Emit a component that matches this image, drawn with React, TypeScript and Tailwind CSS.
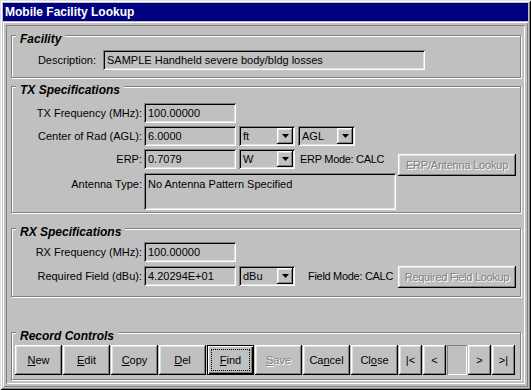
import React from 'react';

// classic 3D bevels
const raised =
  'shadow-[inset_-1px_-1px_0_#000,inset_1px_1px_0_#fff,inset_-2px_-2px_0_#808080,inset_2px_2px_0_#dfdfdf]';
const sunken =
  'shadow-[inset_1px_1px_0_#808080,inset_-1px_-1px_0_#fff,inset_2px_2px_0_#000,inset_-2px_-2px_0_#dfdfdf]';
const disabledText = 'text-[#808080] [text-shadow:1px_1px_0_#fff]';

const Arrow = () => (
  <svg width="7" height="4" viewBox="0 0 7 4">
    <path d="M0 0h7L3.5 4z" fill="#000" />
  </svg>
);

const Group: React.FC<{ label: string; className?: string; children?: React.ReactNode }> = ({
  label,
  className = '',
  children,
}) => (
  <div
    className={`relative w-[510px] border border-[#808080] shadow-[inset_1px_1px_0_#fff,1px_1px_0_#fff] ${className}`}
  >
    <span className="absolute left-[4px] top-[-4px] px-[4px] bg-[#c0c0c0] text-[12px] leading-[14px] font-bold italic">
      {label}
    </span>
    {children}
  </div>
);

const Field: React.FC<{ value: string; className?: string }> = ({ value, className = '' }) => (
  <div className={`${sunken} h-[20px] pl-[4px] leading-[20px] whitespace-nowrap overflow-hidden ${className}`}>
    {value}
  </div>
);

const Combo: React.FC<{ value: string; className?: string }> = ({ value, className = '' }) => (
  <div className={`${sunken} h-[20px] flex items-center justify-between pl-[4px] pr-[2px] ${className}`}>
    <span>{value}</span>
    <div className={`${raised} w-[16px] h-[16px] flex items-center justify-center`}>
      <Arrow />
    </div>
  </div>
);

const Btn: React.FC<{
  children: React.ReactNode;
  className?: string;
  disabled?: boolean;
  isDefault?: boolean;
}> = ({ children, className = 'w-[47px]', disabled, isDefault }) => {
  if (isDefault) {
    return (
      <div
        className={`${className} h-[30px] flex border border-black shadow-[inset_1px_1px_0_#fff,inset_-1px_-1px_0_#000,inset_-2px_-2px_0_#808080]`}
      >
        <div className="flex-1 m-[3px] border border-dotted border-black flex items-center justify-center">
          {children}
        </div>
      </div>
    );
  }
  return (
    <div
      className={`${raised} ${className} h-[30px] flex items-center justify-center whitespace-nowrap ${disabled ? disabledText : ''}`}
    >
      {children}
    </div>
  );
};

const Label: React.FC<{ children: React.ReactNode; className?: string }> = ({ children, className = 'w-[130px]' }) => (
  <div className={`${className} text-right whitespace-nowrap shrink-0`}>{children}</div>
);

export default function App() {
  return (
    <div className="w-[531px] h-[390px] bg-[#c0c0c0] p-[3px] flex flex-col text-[11px] text-black font-['Liberation_Sans',Arial,sans-serif] shadow-[inset_1px_1px_0_#dfdfdf,inset_-1px_-1px_0_#000,inset_2px_2px_0_#fff,inset_-2px_-2px_0_#808080]">
      {/* title bar */}
      <div className="h-[18px] bg-[#000080] text-white text-[12px] leading-[18px] font-bold pl-[2px]">
        Mobile Facility Lookup
      </div>

      <div className="mt-[1px] flex-1 pt-[13px] pl-[8px] shadow-[inset_1px_1px_0_#fff,inset_-1px_-1px_0_#808080,inset_3px_3px_0_#c0c0c0,inset_-3px_-3px_0_#c0c0c0,inset_4px_4px_0_#808080,inset_-4px_-4px_0_#fff]">
        {/* Facility */}
        <Group label="Facility" className="h-[43px]">
          <div className="mt-[14px] flex items-center">
            <Label className="w-[84px]">Description:</Label>
            <Field value="SAMPLE Handheld severe body/bldg losses" className="ml-[7px] w-[322px]" />
          </div>
        </Group>

        {/* TX */}
        <Group label="TX Specifications" className="mt-[8px] h-[127px]">
          <div className="mt-[16px] flex items-center">
            <Label>TX Frequency (MHz):</Label>
            <Field value="100.00000" className="ml-[2px] w-[92px]" />
          </div>
          <div className="mt-[3px] flex items-center">
            <Label>Center of Rad (AGL):</Label>
            <Field value="6.0000" className="ml-[2px] w-[92px]" />
            <Combo value="ft" className="ml-[3px] w-[56px]" />
            <Combo value="AGL" className="ml-[3px] w-[57px]" />
          </div>
          <div className="mt-[3px] flex items-start">
            <div className="w-[384px]">
              <div className="flex items-center">
                <Label>ERP:</Label>
                <Field value="0.7079" className="ml-[2px] w-[92px]" />
                <Combo value="W" className="ml-[3px] w-[56px]" />
                <span className="ml-[5px] whitespace-nowrap tracking-[-0.3px]">ERP Mode: CALC</span>
              </div>
              <div className="mt-[4px] flex items-start">
                <Label className="w-[130px] pt-[3px]">Antenna Type:</Label>
                <div className={`${sunken} ml-[2px] w-[252px] h-[37px] pl-[4px] pt-[3px]`}>
                  No Antenna Pattern Specified
                </div>
              </div>
            </div>
            <Btn className="ml-[2px] mt-[5px] w-[118px] !h-[22px] tracking-[-0.2px]" disabled>
              ERP/Antenna Lookup
            </Btn>
          </div>
        </Group>

        {/* RX */}
        <Group label="RX Specifications" className="mt-[15px] h-[69px]">
          <div className="mt-[13px] flex items-center">
            <Label>RX Frequency (MHz):</Label>
            <Field value="100.00000" className="ml-[2px] w-[92px]" />
          </div>
          <div className="mt-[4px] flex items-start">
            <Label className="w-[130px] leading-[20px]">Required Field (dBu):</Label>
            <Field value="4.20294E+01" className="ml-[2px] w-[92px]" />
            <Combo value="dBu" className="ml-[3px] w-[56px]" />
            <span className="ml-[13px] leading-[20px] whitespace-nowrap tracking-[-0.3px]">Field Mode: CALC</span>
            <Btn className="ml-auto mr-[4px] w-[118px] !h-[22px] tracking-[-0.3px]" disabled>
              Required Field Lookup
            </Btn>
          </div>
        </Group>

        {/* Record controls */}
        <Group label="Record Controls" className="mt-[35px] h-[48px]">
          <div className="mt-[12px] ml-[3px] flex gap-[1px]">
            <Btn><u>N</u>ew</Btn>
            <Btn><u>E</u>dit</Btn>
            <Btn><u>C</u>opy</Btn>
            <Btn><u>D</u>el</Btn>
            <Btn isDefault><u>F</u>ind</Btn>
            <Btn disabled><u>S</u>ave</Btn>
            <Btn>Ca<u>n</u>cel</Btn>
            <Btn>Cl<u>o</u>se</Btn>
            <Btn className="w-[23px]">|&lt;</Btn>
            <Btn className="w-[23px]">&lt;</Btn>
            <div className="w-[20px] h-[30px] shadow-[inset_1px_1px_0_#808080,inset_-1px_-1px_0_#fff]" />
            <Btn className="w-[23px]">&gt;</Btn>
            <Btn className="w-[23px]">&gt;|</Btn>
          </div>
        </Group>
      </div>
    </div>
  );
}
